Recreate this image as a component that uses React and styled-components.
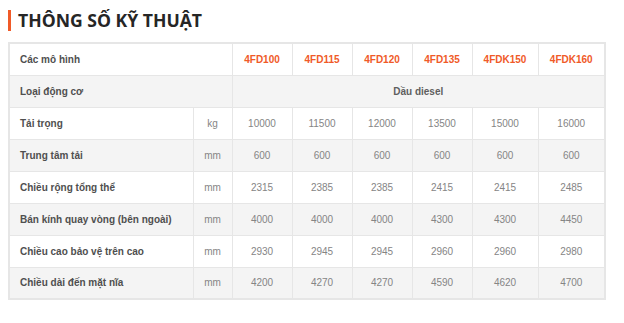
import styled, { createGlobalStyle } from "styled-components";

const GlobalStyle = createGlobalStyle`
    body {
        margin: 0;
        background: #ffffff;
        font-family: "Liberation Sans", Arial, sans-serif;
    }
`;

const models = ["4FD100", "4FD115", "4FD120", "4FD135", "4FDK150", "4FDK160"];

const specs = [
    { label: "Tải trọng", unit: "kg", values: [10000, 11500, 12000, 13500, 15000, 16000] },
    { label: "Trung tâm tải", unit: "mm", values: [600, 600, 600, 600, 600, 600] },
    { label: "Chiều rộng tổng thể", unit: "mm", values: [2315, 2385, 2385, 2415, 2415, 2485] },
    { label: "Bán kính quay vòng (bên ngoài)", unit: "mm", values: [4000, 4000, 4000, 4300, 4300, 4450] },
    { label: "Chiều cao bảo vệ trên cao", unit: "mm", values: [2930, 2945, 2945, 2960, 2960, 2980] },
    { label: "Chiều dài đến mặt nĩa", unit: "mm", values: [4200, 4270, 4270, 4590, 4620, 4700] },
];

const colWidths = [184, 39, 60, 60, 60, 60, 66, 67];

const App = () => {
    return (
        <Page>
            <GlobalStyle />
            <Title>THÔNG SỐ KỸ THUẬT</Title>
            <SpecTable>
                <colgroup>
                    {colWidths.map((w, i) => (
                        <col key={i} style={{ width: w }} />
                    ))}
                </colgroup>
                <tbody>
                    <Row>
                        <Label colSpan={2}>Các mô hình</Label>
                        {models.map((m) => (
                            <Model key={m}>{m}</Model>
                        ))}
                    </Row>
                    <Row $shaded>
                        <Label colSpan={2}>Loại động cơ</Label>
                        <Engine colSpan={6}>Dầu diesel</Engine>
                    </Row>
                    {specs.map((s, i) => (
                        <Row key={s.label} $shaded={i % 2 === 1}>
                            <Label>{s.label}</Label>
                            <Value>{s.unit}</Value>
                            {s.values.map((v, j) => (
                                <Value key={j}>{v}</Value>
                            ))}
                        </Row>
                    ))}
                </tbody>
            </SpecTable>
        </Page>
    );
};

export default App;

//Estilos
const Page = styled.div`
    padding: 10px 0 0 8px;
    width: 600px;
`;

const Title = styled.h2`
    margin: 0 0 11px 0;
    padding-left: 7px;
    border-left: 3px solid #f05a28;
    font-family: "Open Sans", sans-serif;
    font-weight: 700;
    font-size: 17.6px;
    line-height: 21px;
    color: #262626;
`;

const SpecTable = styled.table`
    width: 598px;
    border-collapse: collapse;
    table-layout: fixed;
    border: 2px solid #e6e6e6;
    font-size: 10px;
`;

const Row = styled.tr`
    height: 32px;
    background: ${(p) => (p.$shaded ? "#f4f4f4" : "#ffffff")};
`;

const Cell = styled.td`
    border: 1px solid #e6e6e6;
    padding: 0 10px;
    white-space: nowrap;
`;

const Label = styled(Cell)`
    text-align: left;
    font-weight: 700;
    color: #4f4f4f;
`;

const Value = styled(Cell)`
    padding: 0;
    text-align: center;
    color: #858585;
`;

const Model = styled(Value)`
    font-weight: 700;
    color: #f05a28;
`;

const Engine = styled(Value)`
    font-weight: 700;
    color: #5f5f5f;
`;
